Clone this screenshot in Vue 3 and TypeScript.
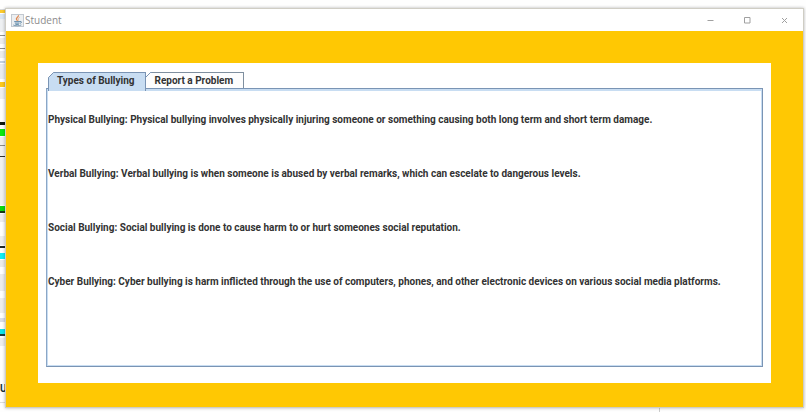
<script setup lang="ts">
import { ref } from 'vue'

interface Strip {
  y: number
  h: number
  color: string
}

interface Tab {
  id: string
  label: string
}

// Slices of the windows behind this one that stay visible at the left edge
const strips: Strip[] = [
  { y: 9, h: 1, color: '#d9dadc' },
  { y: 10, h: 3, color: '#fccb2e' },
  { y: 14, h: 5, color: '#d9e6f4' },
  { y: 19, h: 13, color: '#eef0f2' },
  { y: 35, h: 1, color: '#8e8e8e' },
  { y: 38, h: 6, color: '#ececec' },
  { y: 48, h: 1, color: '#8e8e8e' },
  { y: 51, h: 7, color: '#ececec' },
  { y: 61, h: 2, color: '#c3d0df' },
  { y: 64, h: 15, color: '#e9ebee' },
  { y: 82, h: 5, color: '#fcc81c' },
  { y: 88, h: 11, color: '#eeeeee' },
  { y: 122, h: 3, color: '#101810' },
  { y: 129, h: 7, color: '#0be80f' },
  { y: 137, h: 68, color: '#f0f0f0' },
  { y: 145, h: 1, color: '#8a8a8a' },
  { y: 156, h: 1, color: '#333333' },
  { y: 206, h: 5, color: '#0cd810' },
  { y: 211, h: 2, color: '#183818' },
  { y: 214, h: 8, color: '#ededed' },
  { y: 236, h: 9, color: '#ededed' },
  { y: 246, h: 2, color: '#202828' },
  { y: 253, h: 6, color: '#10eef4' },
  { y: 260, h: 7, color: '#ebebeb' },
  { y: 274, h: 17, color: '#ebebeb' },
  { y: 298, h: 15, color: '#ededed' },
  { y: 318, h: 4, color: '#d8dde8' },
  { y: 329, h: 5, color: '#10e4ea' },
  { y: 334, h: 2, color: '#1c3c40' },
  { y: 338, h: 8, color: '#ededed' },
  { y: 402, h: 1, color: '#dcdcdc' },
]

const tabs: Tab[] = [
  { id: 'types', label: 'Types of Bullying' },
  { id: 'report', label: 'Report a Problem' },
]
const active = ref<string>('types')

const entries: string[] = [
  'Physical Bullying: Physical bullying involves physically injuring someone or something causing both long term and short term damage.',
  'Verbal Bullying: Verbal bullying is when someone is abused by verbal remarks, which can escelate to dangerous levels.',
  'Social Bullying: Social bullying is done to cause harm to or hurt someones social reputation.',
  'Cyber Bullying: Cyber bullying is harm inflicted through the use of computers, phones, and other electronic devices on various social media platforms.',
]
</script>

<template>
  <div class="desktop">
    <svg class="behind" width="6" height="412" viewBox="0 0 6 412" aria-hidden="true">
      <rect v-for="s in strips" :key="s.y" x="0" :y="s.y" width="6" :height="s.h" :fill="s.color" />
    </svg>
    <span class="behind-letter">U</span>
    <span class="behind-rule"></span>

    <main class="window">
      <header class="titlebar">
        <svg class="java" width="13" height="13" viewBox="0 0 13 13" aria-hidden="true">
          <rect x="0.5" y="0.5" width="12" height="12" fill="#eceff2" stroke="#c3c9d0" />
          <path d="M7.4 1.2C8.2 2.8 4.6 3.6 5.4 5.2C5.7 5.9 6.4 6.2 6.2 7" fill="none" stroke="#dd8650" stroke-width="1.2" />
          <path d="M8.6 3.4C7 4 6.7 4.8 7.3 5.5C7.6 6 7.3 6.5 7 6.8" fill="none" stroke="#e3a276" stroke-width="0.8" />
          <path d="M3.2 7.6H9M9 7.6C11 7 11 9 8.9 9.3M3.8 9.1H8.4M4.4 10.4H7.8" fill="none" stroke="#648cab" stroke-width="1" />
          <path d="M2.2 11C4 12.1 8.6 12 10.4 10.9" fill="none" stroke="#7193ad" stroke-width="0.9" />
        </svg>
        <h1 class="title">Student</h1>
        <div class="controls">
          <button type="button" aria-label="Minimize">
            <svg width="7" height="7" viewBox="0 0 7 7"><path d="M0.5 3.5H6.5" /></svg>
          </button>
          <button type="button" aria-label="Maximize">
            <svg width="7" height="7" viewBox="0 0 7 7"><path d="M0.5 0.5H6V6H0.5Z" /></svg>
          </button>
          <button type="button" aria-label="Close">
            <svg width="7" height="7" viewBox="0 0 7 7"><path d="M1 1L6 6M6 1L1 6" /></svg>
          </button>
        </div>
      </header>

      <div class="frame">
        <section class="content">
          <div class="tabs" role="tablist">
            <button
              v-for="t in tabs"
              :id="'tab-' + t.id"
              :key="t.id"
              type="button"
              role="tab"
              class="tab"
              :class="{ selected: active === t.id }"
              :aria-selected="active === t.id"
              aria-controls="panel"
              @click="active = t.id"
            >
              <svg class="corner" width="7" height="7" viewBox="0 0 7 7" aria-hidden="true">
                <path class="cut" d="M0 0H6L0 6Z" />
                <path class="slope" d="M0.5 6.5V5.5L5.5 0.5H7" />
              </svg>
              {{ t.label }}
            </button>
          </div>
          <div id="panel" class="panel" role="tabpanel" :aria-labelledby="'tab-' + active">
            <template v-if="active === 'types'">
              <p v-for="e in entries" :key="e">{{ e }}</p>
            </template>
          </div>
        </section>
      </div>
    </main>
  </div>
</template>

<style>
body {
  background: #fefefe;
}
</style>

<style scoped>
.desktop {
  position: relative;
  display: flex;
  box-sizing: border-box;
  min-height: 100vh;
  padding: 8px 2px 4px 5px;
  overflow: hidden;
  font-family: Roboto, 'Liberation Sans', Arial, sans-serif;
}

.behind {
  position: absolute;
  left: 0;
  top: 0;
}

.behind-letter {
  position: absolute;
  left: 0;
  bottom: 17px;
  font-size: 10px;
  line-height: 12px;
  font-weight: bold;
  color: #16343c;
}

.behind-rule {
  position: absolute;
  right: 146px;
  bottom: 0;
  width: 1px;
  height: 4px;
  background: #cccccc;
}

.window {
  position: relative;
  display: flex;
  flex: 1;
  flex-direction: column;
  min-width: 0;
  border: 1px solid #cfcdc4;
  background: #ffffff;
  box-shadow: 0 0 3px rgba(0, 0, 0, 0.3);
}

.titlebar {
  display: flex;
  align-items: center;
  height: 22px;
  padding-left: 5px;
}

.java {
  flex: none;
}

.title {
  flex: 1;
  margin: 0 0 0 1px;
  font-family: 'Open Sans', 'Noto Sans', sans-serif;
  font-size: 10px;
  line-height: 14px;
  font-weight: normal;
  color: #8c8c8c;
}

.controls {
  display: flex;
  align-self: stretch;
}

.controls button {
  display: flex;
  align-items: center;
  justify-content: center;
  width: 37px;
  padding: 0;
  border: 0;
  background: none;
}

.controls path {
  fill: none;
  stroke: #a0a0a0;
}

.frame {
  display: flex;
  flex: 1;
  padding: 32px 32px 24px;
  background: #ffc803;
}

.content {
  display: flex;
  flex: 1;
  flex-direction: column;
  min-width: 0;
  padding: 9px 8px 16px;
  background: #ffffff;
}

.tabs {
  display: flex;
  padding-left: 2px;
}

.tab {
  position: relative;
  height: 16px;
  margin: 0;
  padding: 0 10px 0 8px;
  border: 1px solid #7f8f9f;
  border-bottom: 0;
  border-left-color: #7a9cc0;
  background: #fdfdfd;
  font-family: inherit;
  font-size: 10px;
  line-height: 16px;
  font-weight: bold;
  color: #333333;
  white-space: nowrap;
}

.tab + .tab {
  border-left: 0;
}

.tab.selected {
  z-index: 1;
  height: 19px;
  margin-bottom: -3px;
  padding: 0 11px 3px 8px;
  border-color: #7a94b4;
  background: #c8ddf2;
}

.corner {
  position: absolute;
  left: -1px;
  top: -1px;
}

.cut {
  fill: #ffffff;
}

.slope {
  fill: none;
  stroke: #7a94b4;
}

.panel {
  flex: 1;
  padding: 24px 0 0;
  border: 1px solid #7a94b4;
  border-left-color: #8ba6c6;
  box-shadow: inset 0 0 0 1px #c8ddf2, inset 0 2px 0 #c8ddf2;
  background: #ffffff;
}

.panel p {
  margin: 0 0 40px;
  padding-left: 1px;
  font-size: 10px;
  line-height: 14px;
  font-weight: bold;
  color: #333333;
  white-space: nowrap;
}
</style>
